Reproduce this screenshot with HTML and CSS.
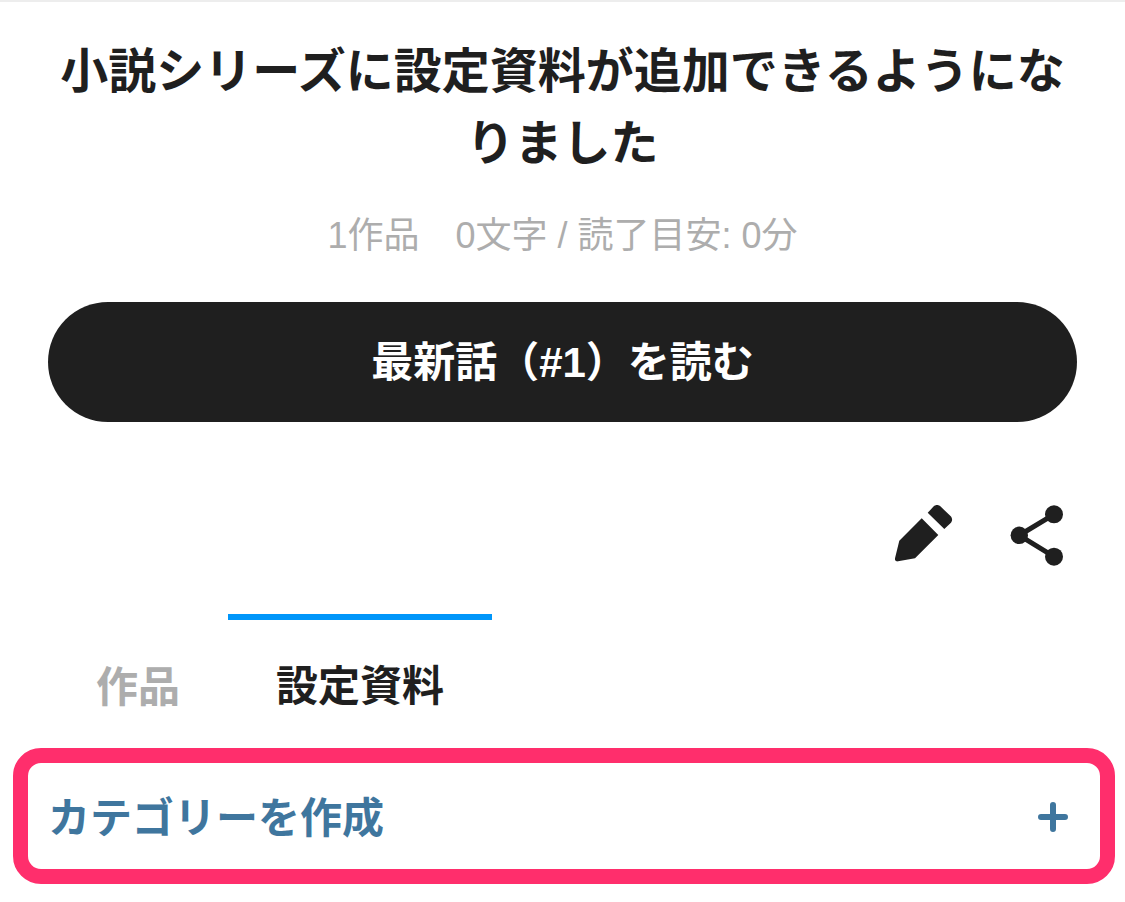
FILE: index.html
```html
<!DOCTYPE html>
<html lang="ja">
<head>
<meta charset="utf-8">
<title>小説シリーズ</title>
<link rel="stylesheet" href="styles.css">
</head>
<body>
<main class="page">
  <h1 class="title">小説シリーズに設定資料が追加できるようになりました</h1>
  <p class="meta">1作品　0文字 / 読了目安: 0分</p>
  <a class="read-btn"><span class="read-label">最新話（#1）を読む</span></a>
  <div class="actions">
    <svg class="icon" width="60" height="60" viewBox="0 0 60 60"><path fill="#1f1f1f" d="M27.700 14.300 44.300 31 21 54.300 4 57.300C1.800 57.700.6 56.500 1 54.300L5.300 36.700Z"/><path fill="#1f1f1f" d="M33.700 8.700 39.500 2.600C41.500.6 44.600.6 46.600 2.600L56.500 12C58.600 14 58.600 17 56.700 19L50.300 25Z"/></svg>
    <svg class="icon" width="55" height="60" viewBox="0 0 55 60"><path fill="none" stroke="#1f1f1f" stroke-width="5" d="M44 10.300 9.300 31.300 44 52.700"/><circle fill="#1f1f1f" cx="44" cy="10.300" r="9"/><circle fill="#1f1f1f" cx="9.300" cy="31.300" r="8.700"/><circle fill="#1f1f1f" cx="44" cy="52.700" r="9"/></svg>
  </div>
  <nav class="tabs">
    <a class="tab">作品</a>
    <a class="tab tab-active">設定資料</a>
  </nav>
  <div class="category">
    <span class="category-label">カテゴリーを作成</span>
    <svg class="category-plus" width="30" height="30" viewBox="0 0 30 30"><path stroke="#3f769e" stroke-width="6" stroke-linecap="round" d="M15 3V27M3 15H27"/></svg>
  </div>
</main>
</body>
</html>
```
FILE: styles.css
```css
* { box-sizing: border-box; }
html, body { margin: 0; padding: 0; background: #fff; }
body {
  font-family: "Liberation Sans", "Noto Sans CJK JP", sans-serif;
  color: #1f1f1f;
}
.page {
  width: 1125px;
  height: 902px;
  overflow: hidden;
  border-top: 2px solid #ededed;
  padding: 34px 13px 0 13px;
}
.title {
  margin: 0 35px;
  font-size: 48px;
  line-height: 72px;
  font-weight: 700;
  text-align: center;
}
.meta {
  margin: 29px 0 0;
  font-size: 36px;
  line-height: 54px;
  color: #adadad;
  text-align: center;
}
.read-btn {
  display: flex;
  align-items: center;
  justify-content: center;
  margin: 39px 35px 0;
  height: 120px;
  border-radius: 60px;
  background: #1f1f1f;
  color: #fff;
  font-size: 42px;
  font-weight: 700;
}
.read-label { margin-bottom: 8px; }
.actions {
  display: flex;
  justify-content: flex-end;
  gap: 56px;
  margin: 82px 47px 0 0;
  height: 60px;
}
.icon { overflow: visible; display: block; }
.tabs {
  display: flex;
  margin-top: 50px;
  padding-left: 35px;
}
.tab {
  width: 180px;
  height: 134px;
  padding-top: 44px;
  font-size: 42px;
  line-height: 60px;
  font-weight: 700;
  color: #adadad;
  text-align: center;
}
.tab-active {
  width: 264px;
  border-top: 6px solid #0096fa;
  padding-top: 37px;
  color: #1f1f1f;
}
.category {
  display: flex;
  align-items: center;
  justify-content: space-between;
  width: 1102px;
  height: 136px;
  border: 15px solid #ff2e6c;
  border-radius: 28px;
  padding: 0 32px 0 20px;
  font-size: 42px;
  font-weight: 700;
  color: #3f769e;
}
.category-label { margin-bottom: 4px; }
.category-plus { margin-top: 2px; }
```
